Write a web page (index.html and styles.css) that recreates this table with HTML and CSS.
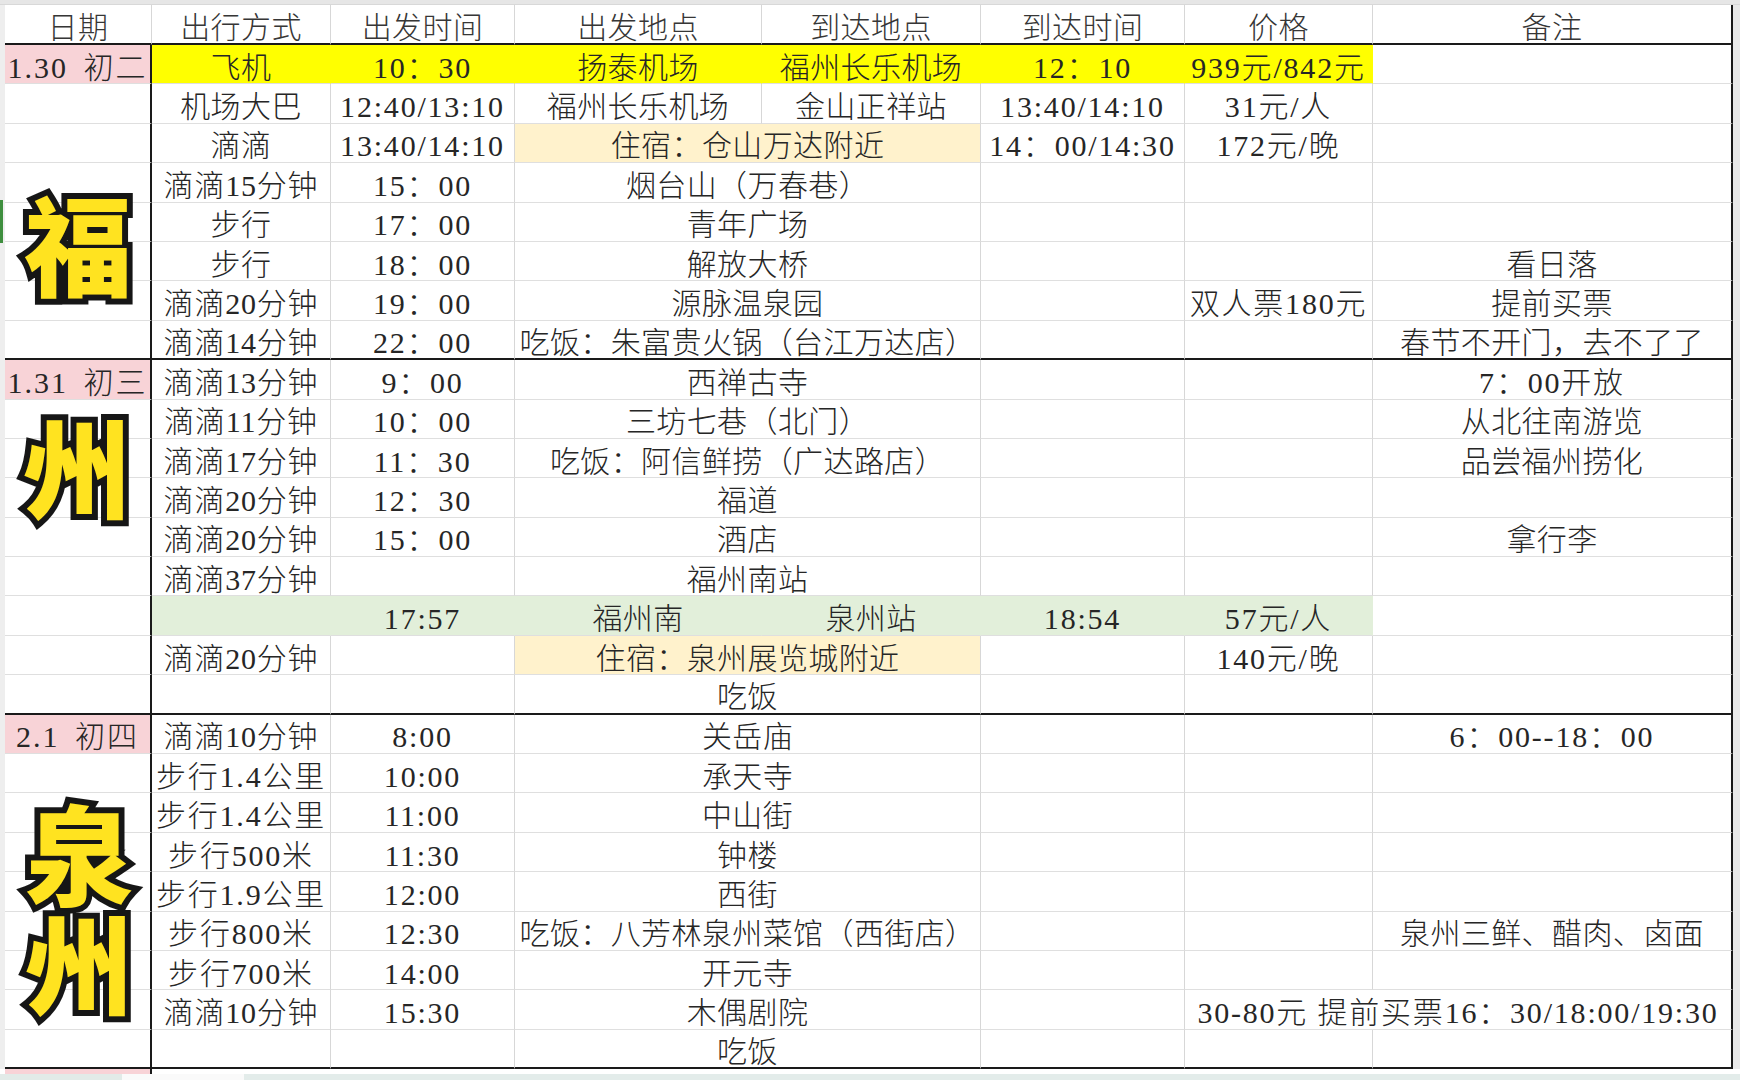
FILE: index.html
```html
<!DOCTYPE html>
<html lang="zh-CN">
<head>
<meta charset="utf-8">
<title>福州泉州行程</title>
<link rel="stylesheet" href="styles.css">
</head>
<body>
<div class="page">
  <div class="topbar"></div>
  <div class="main">
    <div class="gutter"><div class="mark"></div></div>
    <div class="sheet">
      <div class="c hd">日期</div><div class="c hd">出行方式</div><div class="c hd">出发时间</div><div class="c hd">出发地点</div><div class="c hd">到达地点</div><div class="c hd">到达时间</div><div class="c hd">价格</div><div class="c hd h">备注</div>

      <div class="c a pk dt">1.30 初二</div><div class="c y">飞机</div><div class="c y n">10：30</div><div class="c y">扬泰机场</div><div class="c y">福州长乐机场</div><div class="c y n">12：10</div><div class="c y n">939元/842元</div><div class="c h"></div>
      <div class="c a"></div><div class="c">机场大巴</div><div class="c n">12:40/13:10</div><div class="c">福州长乐机场</div><div class="c">金山正祥站</div><div class="c n">13:40/14:10</div><div class="c n">31元/人</div><div class="c h"></div>
      <div class="c a"></div><div class="c">滴滴</div><div class="c n">13:40/14:10</div><div class="c s2 cr">住宿：仓山万达附近</div><div class="c n">14：00/14:30</div><div class="c n">172元/晚</div><div class="c h"></div>
      <div class="c a"></div><div class="c m">滴滴15分钟</div><div class="c n">15：00</div><div class="c s2">烟台山（万春巷）</div><div class="c"></div><div class="c"></div><div class="c h"></div>
      <div class="c a"></div><div class="c">步行</div><div class="c n">17：00</div><div class="c s2">青年广场</div><div class="c"></div><div class="c"></div><div class="c h"></div>
      <div class="c a"></div><div class="c">步行</div><div class="c n">18：00</div><div class="c s2">解放大桥</div><div class="c"></div><div class="c"></div><div class="c h">看日落</div>
      <div class="c a"></div><div class="c m">滴滴20分钟</div><div class="c n">19：00</div><div class="c s2">源脉温泉园</div><div class="c"></div><div class="c n">双人票180元</div><div class="c h">提前买票</div>
      <div class="c a e"></div><div class="c e m">滴滴14分钟</div><div class="c e n">22：00</div><div class="c s2 e">吃饭：朱富贵火锅（台江万达店）</div><div class="c e"></div><div class="c e"></div><div class="c h e">春节不开门，去不了了</div>

      <div class="c a pk dt">1.31 初三</div><div class="c m">滴滴13分钟</div><div class="c n">9：00</div><div class="c s2">西禅古寺</div><div class="c"></div><div class="c"></div><div class="c h n">7：00开放</div>
      <div class="c a"></div><div class="c m">滴滴11分钟</div><div class="c n">10：00</div><div class="c s2">三坊七巷（北门）</div><div class="c"></div><div class="c"></div><div class="c h">从北往南游览</div>
      <div class="c a"></div><div class="c m">滴滴17分钟</div><div class="c n">11：30</div><div class="c s2">吃饭：阿信鲜捞（广达路店）</div><div class="c"></div><div class="c"></div><div class="c h">品尝福州捞化</div>
      <div class="c a"></div><div class="c m">滴滴20分钟</div><div class="c n">12：30</div><div class="c s2">福道</div><div class="c"></div><div class="c"></div><div class="c h"></div>
      <div class="c a"></div><div class="c m">滴滴20分钟</div><div class="c n">15：00</div><div class="c s2">酒店</div><div class="c"></div><div class="c"></div><div class="c h">拿行李</div>
      <div class="c a"></div><div class="c m">滴滴37分钟</div><div class="c"></div><div class="c s2">福州南站</div><div class="c"></div><div class="c"></div><div class="c h"></div>
      <div class="c a"></div><div class="c gr"></div><div class="c gr n">17:57</div><div class="c gr">福州南</div><div class="c gr">泉州站</div><div class="c gr n">18:54</div><div class="c gr n">57元/人</div><div class="c h"></div>
      <div class="c a"></div><div class="c m">滴滴20分钟</div><div class="c"></div><div class="c s2 cr">住宿：泉州展览城附近</div><div class="c"></div><div class="c n">140元/晚</div><div class="c h"></div>
      <div class="c a e"></div><div class="c e"></div><div class="c e"></div><div class="c s2 e">吃饭</div><div class="c e"></div><div class="c e"></div><div class="c h e"></div>

      <div class="c a pk dt">2.1 初四</div><div class="c m">滴滴10分钟</div><div class="c n">8:00</div><div class="c s2">关岳庙</div><div class="c"></div><div class="c"></div><div class="c h n">6：00--18：00</div>
      <div class="c a"></div><div class="c n">步行1.4公里</div><div class="c n">10:00</div><div class="c s2">承天寺</div><div class="c"></div><div class="c"></div><div class="c h"></div>
      <div class="c a"></div><div class="c n">步行1.4公里</div><div class="c n">11:00</div><div class="c s2">中山街</div><div class="c"></div><div class="c"></div><div class="c h"></div>
      <div class="c a"></div><div class="c n">步行500米</div><div class="c n">11:30</div><div class="c s2">钟楼</div><div class="c"></div><div class="c"></div><div class="c h"></div>
      <div class="c a"></div><div class="c n">步行1.9公里</div><div class="c n">12:00</div><div class="c s2">西街</div><div class="c"></div><div class="c"></div><div class="c h"></div>
      <div class="c a"></div><div class="c n">步行800米</div><div class="c n">12:30</div><div class="c s2">吃饭：八芳林泉州菜馆（西街店）</div><div class="c"></div><div class="c"></div><div class="c h">泉州三鲜、醋肉、卤面</div>
      <div class="c a"></div><div class="c n">步行700米</div><div class="c n">14:00</div><div class="c s2">开元寺</div><div class="c"></div><div class="c"></div><div class="c h"></div>
      <div class="c a"></div><div class="c m">滴滴10分钟</div><div class="c n">15:30</div><div class="c s2">木偶剧院</div><div class="c"></div><div class="c s2 h n">30-80元 提前买票16：30/18:00/19:30</div>
      <div class="c a e"></div><div class="c e"></div><div class="c e"></div><div class="c s2 e">吃饭</div><div class="c e"></div><div class="c e"></div><div class="c h e"></div>
    </div>
    <div class="rgutter"></div>
  </div>
  <div class="foot">
    <div class="nextrow"><div class="nx-a"></div><div class="nx-rest"></div></div>
    <div class="tabs"><div class="tb1"></div><div class="tb2"></div><div class="tb3"></div></div>
  </div>
  <div class="stk s-fu">福</div>
  <div class="stk s-zhou1">州</div>
  <div class="stk s-quanzhou">泉<br>州</div>
</div>
</body>
</html>
```

FILE: styles.css
```css
* { box-sizing: border-box; }
html, body { margin: 0; padding: 0; }
body {
  width: 1740px;
  height: 1080px;
  overflow: hidden;
  background: #eceeed;
  font-family: "Liberation Serif", "Noto Sans CJK SC", serif;
  color: #262626;
}
.page {
  position: relative;
  display: flex;
  flex-direction: column;
  width: 1740px;
  height: 1080px;
}
.topbar {
  height: 5px;
  background: #e6e6e6;
  border-bottom: 1px solid #d8d8d8;
}
.main { display: flex; }
.gutter {
  width: 5px;
  background: #eeeeee;
}
.mark {
  margin-top: 195px;
  width: 3px;
  height: 43px;
  background: #3e8e3e;
}
.rgutter {
  width: 7px;
  background: #e9e9e9;
}
.sheet {
  display: grid;
  grid-template-columns: 147px 179px 184px 247px 219px 204px 188px 360px;
  grid-template-rows: 40px repeat(26, 39.4px);
  background: #ffffff;
}
.c {
  display: flex;
  align-items: center;
  justify-content: center;
  font-size: 30px;
  font-weight: 300;
  line-height: 1;
  letter-spacing: 0.4px;
  white-space: nowrap;
  padding-top: 7px;
  border-right: 1px solid #d7d7d7;
  border-bottom: 1px solid #dfdfdf;
}
.n { letter-spacing: 1.8px; }
.m { letter-spacing: 0.8px; }
.dt { letter-spacing: 2px; word-spacing: 6px; }
.hd {
  color: #363636;
  padding-top: 8px;
  border-bottom: 2px solid #1a1a1a;
}
.a { border-right: 2px solid #1a1a1a; }
.h { border-right: 2px solid #1a1a1a; }
.e { border-bottom: 2px solid #1a1a1a; }
.s2 { grid-column: span 2; }
.pk { background: #f8d3d7; }
.y { background: #ffff00; border-right-color: #ffff00; }
.gr { background: #e2efda; border-right-color: #e2efda; }
.cr { background: #fff2cc; }

.foot {
  display: flex;
  flex-direction: column;
  flex: 1;
}
.nextrow {
  display: flex;
  height: 5px;
  padding-left: 5px;
  background: #ffffff;
}
.nx-a {
  width: 147px;
  background: #f8d3d7;
  border-right: 2px solid #1a1a1a;
}
.nx-rest { flex: 1; }
.tabs {
  display: flex;
  flex: 1;
}
.tb1 { width: 122px; background: #e2ebe8; }
.tb2 { width: 122px; background: #fafafa; }
.tb3 { flex: 1; background: #e3ecea; }

.stk {
  position: absolute;
  width: 110px;
  font-family: "Liberation Sans", "Noto Sans CJK SC", sans-serif;
  font-weight: 900;
  font-size: 108px;
  line-height: 108px;
  text-align: center;
  color: #ffe320;
  -webkit-text-stroke: 12px #161616;
  paint-order: stroke fill;
  pointer-events: none;
}
.s-fu { left: 23px; top: 197px; }
.s-zhou1 { left: 22px; top: 420px; }
.s-quanzhou { left: 24px; top: 805px; line-height: 110px; }
```
